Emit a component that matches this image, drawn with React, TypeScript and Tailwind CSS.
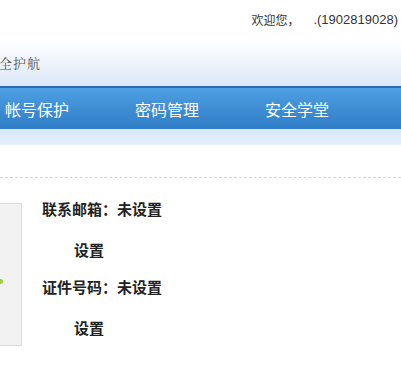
export default function App() {
  const navItems = ["帐号保护", "密码管理", "安全学堂"]

  return (
    <div
      className="w-[401px] h-[372px] overflow-hidden bg-white"
      style={{ fontFamily: '"Noto Sans CJK SC", "Liberation Sans", sans-serif' }}
    >
      {/* top bar */}
      <div className="h-[40px] bg-white flex items-center justify-end pr-[3px] text-[12px] text-[#333] pb-[1px]">
        <span>欢迎您，</span>
        <span className="ml-[14px] font-['Liberation_Sans',sans-serif] text-[13px]">.(1902819028)</span>
      </div>

      {/* header */}
      <div className="h-[46px] bg-gradient-to-b from-white to-[#dbe8f7] flex items-center">
        <span className="-ml-[1px] text-[13px] text-[#555] tracking-[1px] font-['Noto_Serif_CJK_SC','Noto_Sans_CJK_SC',serif]">
          全护航
        </span>
      </div>

      {/* nav */}
      <div className="h-[43px] border-t-2 border-[#2b6cb0] bg-gradient-to-b from-[#4e9fe3] to-[#2f7dc6] flex items-center pl-[5px]">
        {navItems.map((item) => (
          <div key={item} className="w-[130px] text-white text-[16px] leading-none">
            {item}
          </div>
        ))}
      </div>
      <div className="h-[16px] bg-gradient-to-b from-[#d7e8f9] to-[#e6f0fb]" />

      {/* dashed divider */}
      <div className="h-[32px]" />
      <div className="border-t border-dashed border-[#d4d4d4]" />

      {/* content */}
      <div className="flex mt-[25px]">
        <div className="relative w-[22px] h-[143px] bg-[#f2f2f2] border border-l-0 border-[#dcdcdc]">
          <div className="absolute left-0 top-[75px] w-[3px] h-[5px] bg-[#9ed13a] rounded-r-full" />
        </div>
        <div className="ml-[20px] -mt-[1px] flex flex-col text-[15px] font-bold text-[#222]">
          <div className="h-[14px] leading-[14px]">联系邮箱：未设置</div>
          <div className="h-[14px] leading-[14px] mt-[27px] ml-[32px]">设置</div>
          <div className="h-[14px] leading-[14px] mt-[23px]">证件号码：未设置</div>
          <div className="h-[14px] leading-[14px] mt-[27px] ml-[32px]">设置</div>
        </div>
      </div>
    </div>
  )
}
